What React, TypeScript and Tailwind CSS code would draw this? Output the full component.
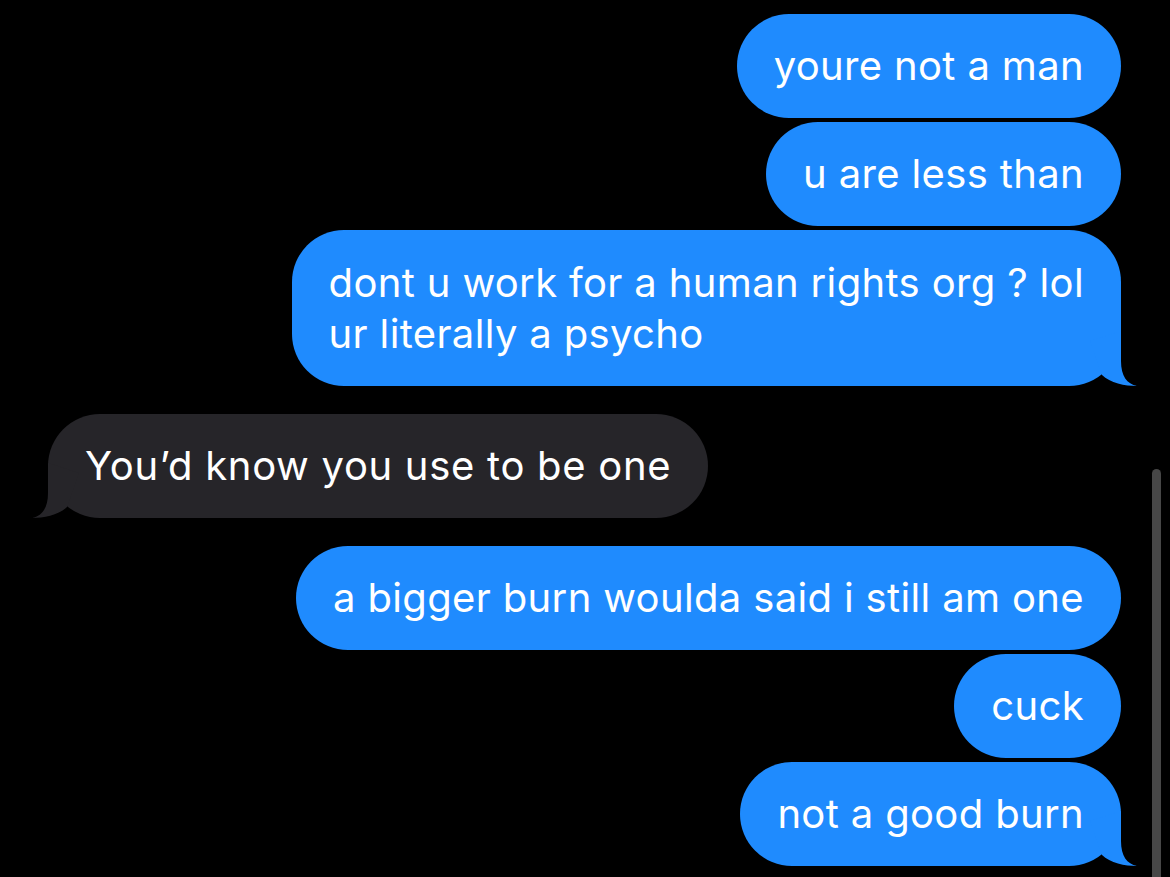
import React from "react";

type Msg = { from: "me" | "them"; lines: string[]; tail?: boolean; gapTop: number };

const msgs: Msg[] = [
  { from: "me", lines: ["youre not a man"], gapTop: 14 },
  { from: "me", lines: ["u are less than"], gapTop: 4 },
  { from: "me", lines: ["dont u work for a human rights org ? lol", "ur literally a psycho"], tail: true, gapTop: 4 },
  { from: "them", lines: ["You\u2019d know you use to be one"], tail: true, gapTop: 28 },
  { from: "me", lines: ["a bigger burn woulda said i still am one"], gapTop: 28 },
  { from: "me", lines: ["cuck"], gapTop: 4 },
  { from: "me", lines: ["not a good burn"], tail: true, gapTop: 4 },
];

function TailRight({ color }: { color: string }) {
  return (
    <svg
      className="absolute right-[-20px] bottom-[-2px]"
      width={60}
      height={62}
      viewBox="-40 -60 60 62"
    >
      <path
        d="M0 -55 L0 -25 C0 -10 6 -2 16 0 C4 0 -11 -3 -19 -11 L-31 -45 Z"
        fill={color}
      />
    </svg>
  );
}

function TailLeft({ color }: { color: string }) {
  return (
    <svg
      className="absolute left-[-20px] bottom-[-2px]"
      width={60}
      height={62}
      viewBox="-20 -60 60 62"
    >
      <path
        d="M0 -55 L0 -25 C0 -10 -6 -2 -16 0 C-4 0 11 -3 19 -11 L31 -45 Z"
        fill={color}
      />
    </svg>
  );
}

export default function App() {
  return (
    <div
      className="relative w-[1170px] h-[877px] bg-black overflow-hidden"
      style={{ fontFamily: "Inter, 'Noto Sans', sans-serif" }}
    >
      <div className="flex flex-col">
        {msgs.map((m, i) => {
          const me = m.from === "me";
          const color = me ? "#1f8bfe" : "#262529";
          const multi = m.lines.length > 1;
          return (
            <div
              key={i}
              className={`flex ${me ? "justify-end pr-[49px]" : "justify-start pl-[48px]"}`}
              style={{ marginTop: m.gapTop }}
            >
              <div
                className={`relative rounded-[52px] px-[37px] pt-[27px] pb-[27px] text-white text-[40px] whitespace-nowrap ${
                  multi ? "leading-[51px]" : "leading-[50px]"
                } ${me ? "bg-[#1f8bfe] tracking-[0.35px]" : "bg-[#262529] tracking-[0.7px]"}`}
              >
                {m.tail && (me ? <TailRight color={color} /> : <TailLeft color={color} />)}
                <div className="relative">
                  {m.lines.map((l, j) => (
                    <div key={j}>{l}</div>
                  ))}
                </div>
              </div>
            </div>
          );
        })}
      </div>
      <div className="absolute left-[1152px] top-[469px] w-[9px] h-[420px] rounded-full bg-[#474747]" />
    </div>
  );
}
